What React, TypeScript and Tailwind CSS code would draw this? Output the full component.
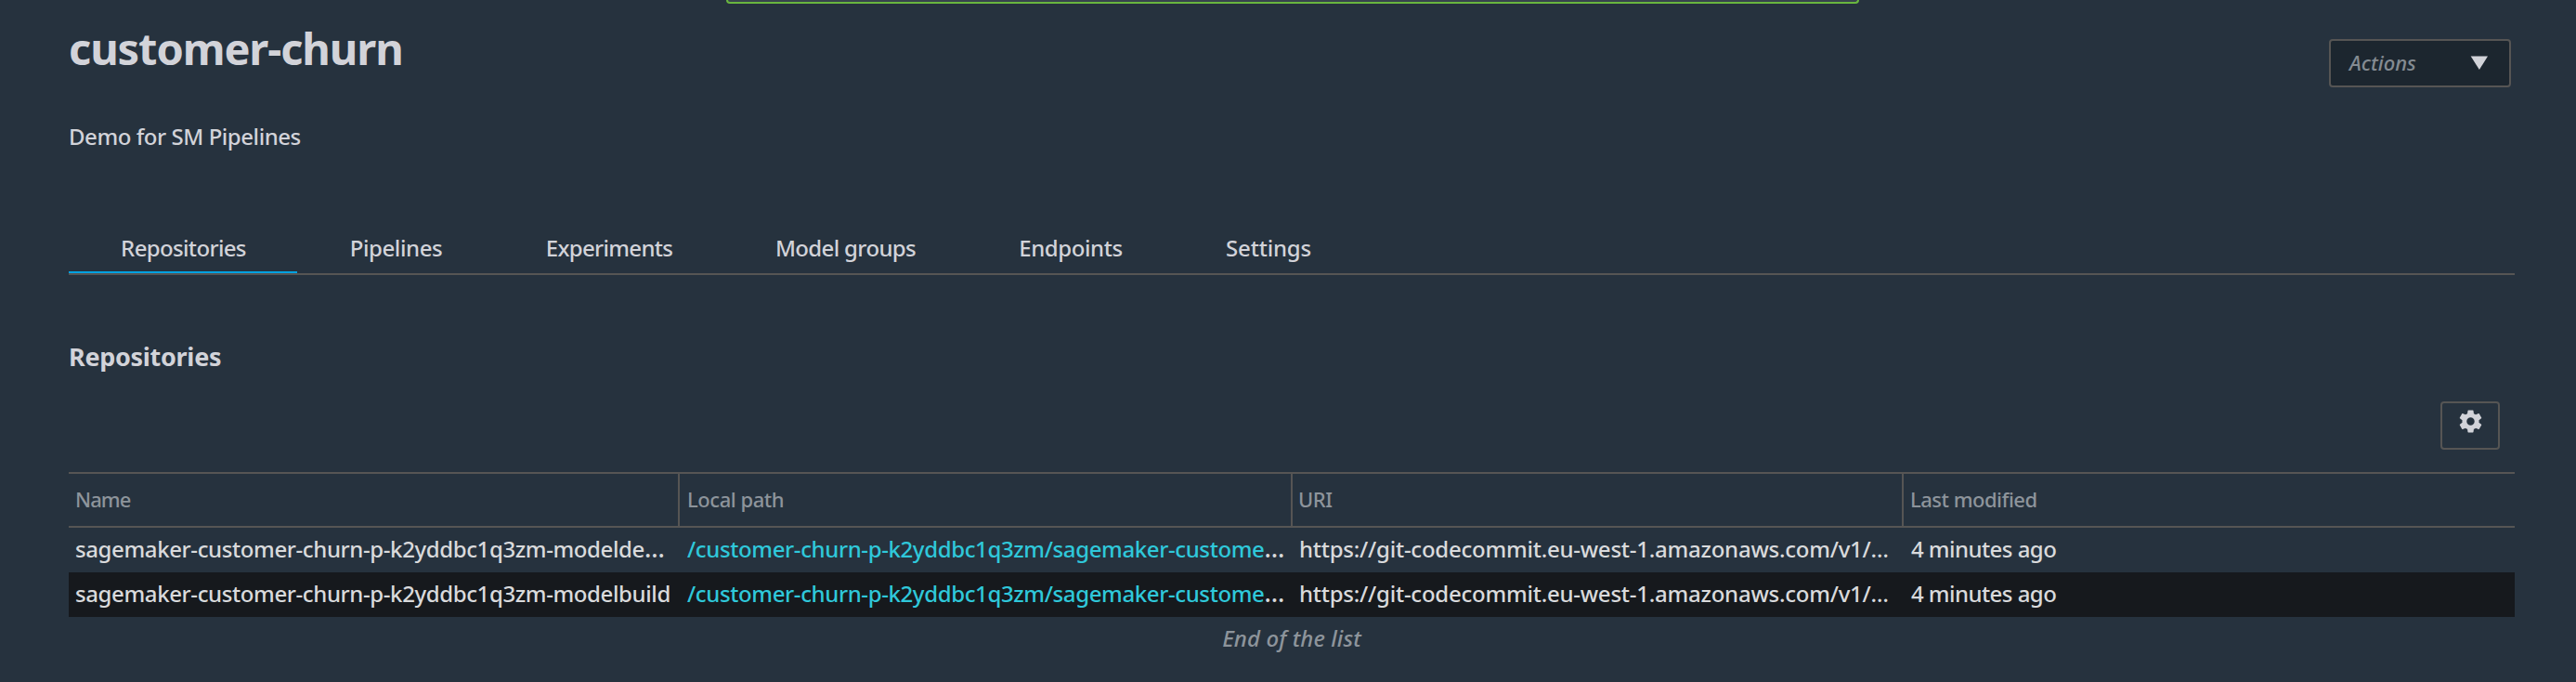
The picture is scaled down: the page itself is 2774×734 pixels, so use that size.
import type { ReactNode } from 'react';

const tabs = [
  { label: 'Repositories', style: 'w-[246px] tracking-[-0.65px]' },
  { label: 'Pipelines', style: 'w-[212px] tracking-[-0.4px]' },
  { label: 'Experiments', style: 'w-[247px] tracking-[-0.68px]' },
  { label: 'Model groups', style: 'w-[262px] tracking-[-0.65px]' },
  { label: 'Endpoints', style: 'w-[223px] tracking-[-0.4px]' },
  { label: 'Settings', style: 'w-[203px] tracking-[-0.2px]' },
];

const rows = [
  { name: 'sagemaker-customer-churn-p-k2yddbc1q3zm-modelde', clipped: true },
  { name: 'sagemaker-customer-churn-p-k2yddbc1q3zm-modelbuild', clipped: false },
];

function Ellipsis() {
  return <span className="text-[27px] leading-none">…</span>;
}

function HeaderCell({ children, className }: { children: ReactNode; className: string }) {
  return <div className={`border-[#565554] leading-[54px] ${className}`}>{children}</div>;
}

export default function App() {
  return (
    <div className="h-[734px] w-[2774px] overflow-hidden bg-[#26323e] px-[74px] font-['Noto_Sans',sans-serif] text-[24px] font-medium whitespace-nowrap text-[#d2d3d9]">
      <div className="-ml-[74px] flex h-[4px] w-[2774px]">
        <div className="ml-[782px] h-[4px] w-[1220px] rounded-b-[4px] border-2 border-t-0 border-[#69b63f] bg-[#38434e]" />
      </div>

      <header className="flex h-[248px] justify-between">
        <div>
          <h1 className="mt-[16px] text-[47px] leading-[64px] font-bold tracking-[-1.1px]">customer-churn</h1>
          <p className="mt-[47px] leading-[32px] tracking-[-0.45px]">Demo for SM Pipelines</p>
        </div>
        <button className="mt-[38px] -mr-[4px] flex h-[52px] w-[196px] items-start justify-between rounded-[4px] border-2 border-[#565554] bg-[#1c262f] pr-[22px] pl-[20px]">
          <span className="mt-[8px] text-[22px] leading-[30px] text-[#848b92] italic">Actions</span>
          <svg className="mt-[16px]" width="20" height="16" viewBox="0 0 20 16">
            <path d="M0.7 0.5H19L9.9 15z" fill="#d2d3d9" />
          </svg>
        </button>
      </header>

      <nav className="flex h-[44px] w-[2634px] border-b-2 border-[#565554]">
        {tabs.map((t, i) => (
          <div key={t.label} className={`flex justify-center ${t.style} ${i === 0 ? 'border-b-2 border-[#00a1e0]' : ''}`}>
            <span className="ml-[1px] leading-[30px]">{t.label}</span>
          </div>
        ))}
      </nav>

      <h2 className="mt-[70px] text-[27px] leading-[36px] font-bold tracking-[-0.3px]">Repositories</h2>

      <div className="mt-[30px] flex justify-end">
        <button className="mr-[8px] flex h-[52px] w-[64px] justify-center rounded-[4px] border-2 border-[#565554]">
          <svg className="mt-[5px]" width="29" height="29" viewBox="0 0 24 24" fill="#d2d3d9">
            <path d="M19.43 12.98c.04-.32.07-.64.07-.98s-.03-.66-.07-.98l2.11-1.65c.19-.15.24-.42.12-.64l-2-3.46c-.12-.22-.39-.3-.61-.22l-2.49 1c-.52-.4-1.08-.73-1.69-.98l-.38-2.65C14.46 2.18 14.25 2 14 2h-4c-.25 0-.46.18-.49.42l-.38 2.65c-.61.25-1.17.59-1.69.98l-2.49-1c-.23-.09-.49 0-.61.22l-2 3.46c-.13.22-.07.49.12.64l2.11 1.65c-.04.32-.07.65-.07.98s.03.66.07.98l-2.11 1.65c-.19.15-.24.42-.12.64l2 3.46c.12.22.39.3.61.22l2.49-1c.52.4 1.08.73 1.69.98l.38 2.65c.03.24.24.42.49.42h4c.25 0 .46-.18.49-.42l.38-2.65c.61-.25 1.17-.59 1.69-.98l2.49 1c.23.09.49 0 .61-.22l2-3.46c.12-.22.07-.49-.12-.64l-2.11-1.65zM12 15.5c-1.93 0-3.5-1.57-3.5-3.5s1.57-3.5 3.5-3.5 3.5 1.57 3.5 3.5-1.57 3.5-3.5 3.5z" />
          </svg>
        </button>
      </div>

      <div className="mt-[24px] w-[2634px]">
        <div className="grid h-[60px] grid-cols-[658px_660px_658px_658px] border-y-2 border-[#565554] text-[22px] text-[#8d949b]">
          <HeaderCell className="border-r-2 pl-[7px] tracking-[-0.9px]">Name</HeaderCell>
          <HeaderCell className="border-r-2 pl-[8px] tracking-[-0.45px]">Local path</HeaderCell>
          <HeaderCell className="border-r-2 pl-[6px] tracking-[-0.5px]">URI</HeaderCell>
          <HeaderCell className="pl-[7px] tracking-[-0.5px]">Last modified</HeaderCell>
        </div>
        {rows.map((row, i) => (
          <div
            key={row.name}
            className={`grid h-[48px] grid-cols-[658px_660px_658px_658px] text-[#d9dadc] ${i === 1 ? 'bg-[#16191d]' : ''}`}
          >
            <div className="pl-[7px] leading-[46px] tracking-[-0.39px]">
              {row.name}
              {row.clipped && <Ellipsis />}
            </div>
            <div className="pl-[8px] leading-[46px] tracking-[-0.38px]">
              <a className="text-[#2fc8da]">/customer-churn-p-k2yddbc1q3zm/sagemaker-custome</a>
              <Ellipsis />
            </div>
            <div className="pl-[7px] leading-[46px] tracking-[-0.24px]">https://git-codecommit.eu-west-1.amazonaws.com/v1/…</div>
            <div className="pl-[8px] leading-[46px] tracking-[-0.55px]">4 minutes ago</div>
          </div>
        ))}
        <div className="text-center leading-[46px] tracking-[0.1px] text-[#8d949b] italic">End of the list</div>
      </div>
    </div>
  );
}
